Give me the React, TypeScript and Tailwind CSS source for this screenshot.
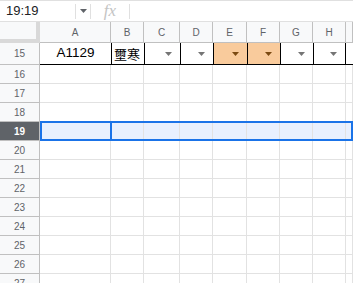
const cols = [
  { l: 'A', w: 'w-[71px]' },
  { l: 'B', w: 'w-[33px]' },
  { l: 'C', w: 'w-[36px]' },
  { l: 'D', w: 'w-[33px]' },
  { l: 'E', w: 'w-[34px]' },
  { l: 'F', w: 'w-[33px]' },
  { l: 'G', w: 'w-[33px]' },
  { l: 'H', w: 'w-[33px]' },
  { l: '', w: 'flex-1' },
];

const rows = [16, 17, 18, 19, 20, 21, 22, 23, 24, 25, 26, 27];

function Arrow({ color }: { color: string }) {
  return (
    <svg width="7" height="4" viewBox="0 0 7 4" className="absolute right-[8px] top-1/2 -translate-y-1/2">
      <path d="M0 0h7L3.5 4z" fill={color} />
    </svg>
  );
}

function RowHeader({ n, selected }: { n: number; selected?: boolean }) {
  return (
    <div
      className={
        selected
          ? 'w-[40px] shrink-0 flex items-center justify-center bg-[#5f6368] text-white font-bold text-[10px] border-r border-b border-[#c0c0c0]'
          : 'w-[40px] shrink-0 flex items-center justify-center bg-[#f8f9fa] text-[#5f6368] text-[10px] border-r border-b border-[#c0c0c0]'
      }
    >
      {n}
    </div>
  );
}

export default function App() {
  return (
    <div className="w-[353px] h-[283px] overflow-hidden bg-white font-['Liberation_Sans',Arial,sans-serif]">
      {/* formula bar */}
      <div className="h-[22px] flex items-center border-t border-b border-[#e0e0e0] text-[13px] text-[#202124]">
        <div className="w-[76px] pl-[6px] border-r border-[#e0e0e0] h-[15px] flex items-center">19:19</div>
        <div className="w-[15px] h-[15px] flex items-center justify-center border-r border-[#e0e0e0]">
          <svg width="7" height="4" viewBox="0 0 7 4">
            <path d="M0 0h7L3.5 4z" fill="#5f6368" />
          </svg>
        </div>
        <div className="w-[39px] h-[15px] flex items-center justify-center border-r border-[#e0e0e0] font-['Liberation_Serif',serif] italic text-[17px] text-[#c4c4c4]">
          fx
        </div>
      </div>

      {/* column headers */}
      <div className="h-[21px] flex bg-[#f8f9fa]">
        <div className="w-[40px] shrink-0 border-r-4 border-b-4 border-[#d9d9d9]" />
        {cols.map((c, i) => (
          <div
            key={i}
            className={`${c.w} shrink-0 flex items-center justify-center text-[10px] text-[#5f6368] border-r border-b border-[#c0c0c0]`}
          >
            {c.l}
          </div>
        ))}
      </div>

      {/* row 15 */}
      <div className="h-[22px] flex">
        <RowHeader n={15} />
        <div className="w-[71px] shrink-0 flex items-center justify-center text-[13.5px] text-black border-b border-black">
          A1129
        </div>
        <div className="w-[33px] shrink-0 flex items-center pl-[2px] text-[13px] text-black border-l border-b border-black font-['Noto_Sans_CJK_TC','Noto_Sans_CJK_SC',sans-serif]">
          壐寒
        </div>
        <div className="w-[36px] shrink-0 relative border-l border-b border-black">
          <Arrow color="#757575" />
        </div>
        <div className="w-[33px] shrink-0 relative border-l border-b border-black">
          <Arrow color="#757575" />
        </div>
        <div className="w-[34px] shrink-0 relative bg-[#f9cb9c] border-l border-b border-black">
          <Arrow color="#7b4a12" />
        </div>
        <div className="w-[33px] shrink-0 relative bg-[#f9cb9c] border-l border-b border-black">
          <Arrow color="#7b4a12" />
        </div>
        <div className="w-[33px] shrink-0 relative border-l border-b border-black">
          <Arrow color="#757575" />
        </div>
        <div className="w-[33px] shrink-0 relative border-l border-r border-b border-black">
          <Arrow color="#757575" />
        </div>
        <div className="flex-1 border-b border-black" />
      </div>

      {/* body rows */}
      {rows.map((n) => {
        const sel = n === 19;
        return (
          <div key={n} className="h-[19px] flex relative">
            <RowHeader n={n} selected={sel} />
            {cols.map((c, i) => (
              <div
                key={i}
                className={`${c.w} shrink-0 border-r border-b border-[#e2e2e2] ${sel ? 'bg-[#e8f0fe]' : 'bg-white'}`}
              />
            ))}
            {sel && (
              <>
                <div className="absolute left-[40px] right-0 top-[-1px] bottom-0 border-2 border-[#1a73e8] pointer-events-none" />
                <div className="absolute left-[40px] w-[72px] top-[-1px] bottom-0 border-2 border-[#1a73e8] pointer-events-none" />
              </>
            )}
          </div>
        );
      })}
    </div>
  );
}
